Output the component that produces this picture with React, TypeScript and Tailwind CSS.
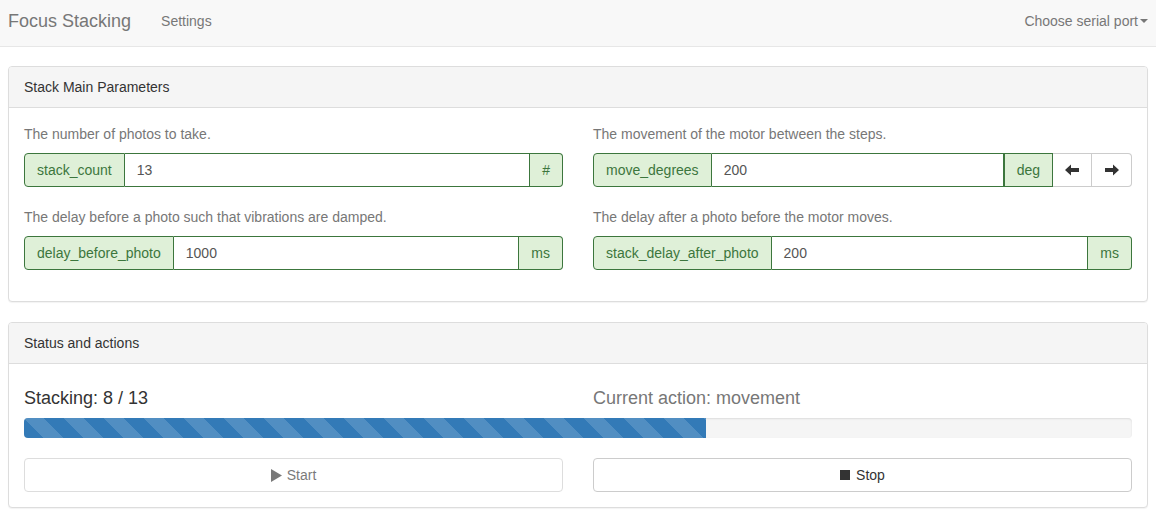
import React from "react";

const FONT = { fontFamily: '"Liberation Sans", Arial, sans-serif' };

function ArrowLeft() {
  return (
    <svg width="14" height="14" viewBox="0 0 14 14">
      <path d="M0 7 L6 1.5 L6 5 L14 5 L14 9 L6 9 L6 12.5 Z" fill="#333" />
    </svg>
  );
}

function ArrowRight() {
  return (
    <svg width="14" height="14" viewBox="0 0 14 14">
      <path d="M14 7 L8 1.5 L8 5 L0 5 L0 9 L8 9 L8 12.5 Z" fill="#333" />
    </svg>
  );
}

function Field({ label, addon, value, unit, last }: { label: string; addon: string; value: string; unit: string; last?: React.ReactNode }) {
  return (
    <div>
      <p className="text-sm leading-5 text-[#777] mb-[9px]">{label}</p>
      <div className="flex h-[34px] text-sm">
        <span className="flex items-center px-3 bg-[#dff0d8] text-[#3c763d] border border-[#3c763d] rounded-l-[4px]">{addon}</span>
        <span className="flex-1 flex items-center px-3 text-[#555] border-y border-r border-[#3c763d] bg-white">{value}</span>
        <span className={`flex items-center px-3 bg-[#dff0d8] text-[#3c763d] border-y border-r border-[#3c763d] ${last ? "border-l" : "rounded-r-[4px]"}`}>{unit}</span>
        {last}
      </div>
    </div>
  );
}

function Panel({ title, children }: { title: string; children: React.ReactNode }) {
  return (
    <section className="border border-[#ddd] rounded-[4px] bg-white mb-5 shadow-[0_1px_1px_rgba(0,0,0,0.05)]">
      <div className="bg-[#f5f5f5] border-b border-[#ddd] px-[15px] py-[10px] text-sm leading-5 text-[#333] rounded-t-[3px]">{title}</div>
      <div className="p-[15px]">{children}</div>
    </section>
  );
}

export default function App() {
  const arrows = (
    <div className="flex">
      <button className="w-[39px] flex items-center justify-center border-y border-r border-[#ccc] bg-white">
        <ArrowLeft />
      </button>
      <button className="w-[40px] flex items-center justify-center border-y border-r border-[#ccc] bg-white rounded-r-[4px]">
        <ArrowRight />
      </button>
    </div>
  );

  return (
    <div style={FONT} className="min-h-[514px] bg-white text-[#333]">
      <nav className="h-[47px] bg-[#f8f8f8] border-b border-[#e7e7e7] flex items-center px-2 mb-[19px]">
        <span className="text-lg text-[#777] -mt-[4px]">Focus Stacking</span>
        <span className="ml-[30px] text-sm text-[#777] -mt-[4px]">Settings</span>
        <span className="ml-auto text-sm text-[#777] flex items-center -mt-[4px]">
          Choose serial port
          <span className="ml-[2px] w-0 h-0 border-x-4 border-x-transparent border-t-4 border-t-[#777]" />
        </span>
      </nav>

      <div className="px-2">
        <Panel title="Stack Main Parameters">
          <div className="grid grid-cols-2 gap-x-[30px] gap-y-[20px] mt-[1px] mb-[16px]">
            <Field label="The number of photos to take." addon="stack_count" value="13" unit="#" />
            <Field label="The movement of the motor between the steps." addon="move_degrees" value="200" unit="deg" last={arrows} />
            <Field label="The delay before a photo such that vibrations are damped." addon="delay_before_photo" value="1000" unit="ms" />
            <Field label="The delay after a photo before the motor moves." addon="stack_delay_after_photo" value="200" unit="ms" />
          </div>
        </Panel>

        <Panel title="Status and actions">
          <div className="grid grid-cols-2 gap-x-[30px] mt-[9px] mb-[10px]">
            <h4 className="text-lg leading-[20px] text-[#333]">Stacking: 8 / 13</h4>
            <h4 className="text-lg leading-[20px] text-[#777]">Current action: movement</h4>
          </div>
          <div className="h-5 bg-[#f5f5f5] rounded-[4px] overflow-hidden shadow-[inset_0_1px_2px_rgba(0,0,0,0.1)] mb-5">
            <div
              className="h-full bg-[#337ab7] bg-[linear-gradient(45deg,rgba(255,255,255,.15)_25%,transparent_25%,transparent_50%,rgba(255,255,255,.15)_50%,rgba(255,255,255,.15)_75%,transparent_75%,transparent)] bg-[length:40px_40px]"
              style={{ width: `${(8 / 13) * 100}%` }}
            />
          </div>
          <div className="grid grid-cols-2 gap-x-[30px]">
            <button className="h-[34px] border border-[#ccc] rounded-[4px] bg-white text-sm text-[#333] opacity-65 flex items-center justify-center gap-[5px]">
              <svg width="11" height="13" viewBox="0 0 11 13"><path d="M0 0 L11 6.5 L0 13 Z" fill="#333" /></svg>
              Start
            </button>
            <button className="h-[34px] border border-[#ccc] rounded-[4px] bg-white text-sm text-[#333] flex items-center justify-center gap-[6px]">
              <span className="w-[10px] h-[10px] bg-[#333]" />
              Stop
            </button>
          </div>
        </Panel>
      </div>
    </div>
  );
}
